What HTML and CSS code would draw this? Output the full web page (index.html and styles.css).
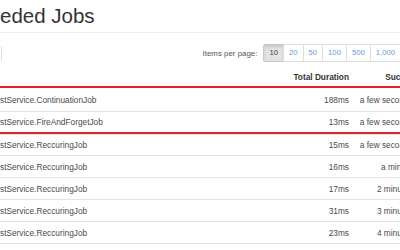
FILE: index.html
```html
<!DOCTYPE html>
<html>
<head>
<meta charset="utf-8">
<link rel="stylesheet" href="styles.css">
</head>
<body>
<div class="page">
  <h1 class="title">eded Jobs</h1>
  <div class="rule"></div>
  <div class="toolbar">
    <div class="edge-btn"></div>
    <div class="per-page">
      <span class="per-label">Items per page:</span>
      <div class="btn-group">
        <span class="pg active">10</span>
        <span class="pg">20</span>
        <span class="pg">50</span>
        <span class="pg">100</span>
        <span class="pg">500</span>
        <span class="pg">1,000</span>
      </div>
    </div>
  </div>
  <div class="table">
    <div class="row head">
      <div class="c name"></div>
      <div class="c dur">Total Duration</div>
      <div class="c succ">Succeeded</div>
    </div>
    <div class="row first">
      <div class="c name">stService.ContinuationJob</div>
      <div class="c dur">188ms</div>
      <div class="c succ">a few seconds ago</div>
    </div>
    <div class="row mark">
      <div class="c name">stService.FireAndForgetJob</div>
      <div class="c dur">13ms</div>
      <div class="c succ">a few seconds ago</div>
    </div>
    <div class="row">
      <div class="c name">stService.ReccuringJob</div>
      <div class="c dur">15ms</div>
      <div class="c succ">a few seconds ago</div>
    </div>
    <div class="row">
      <div class="c name">stService.ReccuringJob</div>
      <div class="c dur">16ms</div>
      <div class="c succ">a minute ago</div>
    </div>
    <div class="row">
      <div class="c name">stService.ReccuringJob</div>
      <div class="c dur">17ms</div>
      <div class="c succ">2 minutes ago</div>
    </div>
    <div class="row">
      <div class="c name">stService.ReccuringJob</div>
      <div class="c dur">31ms</div>
      <div class="c succ">3 minutes ago</div>
    </div>
    <div class="row">
      <div class="c name">stService.ReccuringJob</div>
      <div class="c dur">23ms</div>
      <div class="c succ">4 minutes ago</div>
    </div>
  </div>
</div>
</body>
</html>
```
FILE: styles.css
```css
html, body {
  margin: 0;
  padding: 0;
  overflow: hidden;
  background: #fff;
}
body {
  font-family: "Liberation Sans", Arial, sans-serif;
  color: #4a4a4a;
}
.page {
  width: 434px;
}
.title {
  margin: 3px 0 0 0;
  font-size: 20.5px;
  line-height: 25px;
  font-weight: normal;
  color: #333;
}
.rule {
  margin-top: 4px;
  height: 1px;
  background: #eee;
}
.toolbar {
  margin-top: 11px;
  display: flex;
  justify-content: space-between;
  align-items: center;
  height: 18px;
  width: 401px;
}
.edge-btn {
  width: 1px;
  height: 15px;
  border-right: 1px solid #ddd;
}
.per-page {
  display: flex;
  align-items: center;
  gap: 7px;
}
.per-label {
  font-size: 7.9px;
  color: #555;
}
.btn-group {
  display: flex;
}
.pg {
  font-size: 7.7px;
  line-height: 16px;
  padding: 0 5px;
  border: 1px solid #ddd;
  margin-left: -1px;
  color: #6b9ad6;
  background: #fff;
}
.pg.active {
  background: #e3e3e3;
  border-color: #c8c8c8;
  color: #444;
  box-shadow: inset 0 2px 3px rgba(0,0,0,0.12);
  border-radius: 2px 0 0 2px;
}
.table {
  margin-top: 6px;
}
.row {
  display: grid;
  grid-template-columns: 1fr 80px 80px;
  height: 21px;
  align-items: center;
  border-bottom: 1px solid #e4e4e4;
  font-size: 8.3px;
}
.row.head {
  height: 18px;
  border-bottom: 2px solid #e3232c;
  font-weight: bold;
  color: #333;
}
.row.first {
  height: 23px;
}
.row.mark {
  height: 20px;
  border-bottom: 2px solid #e3232c;
  box-shadow: 0 1px 0 #e4e4e4;
}
.c {
  white-space: nowrap;
}
.dur, .succ {
  text-align: right;
  padding-right: 5px;
}
```
